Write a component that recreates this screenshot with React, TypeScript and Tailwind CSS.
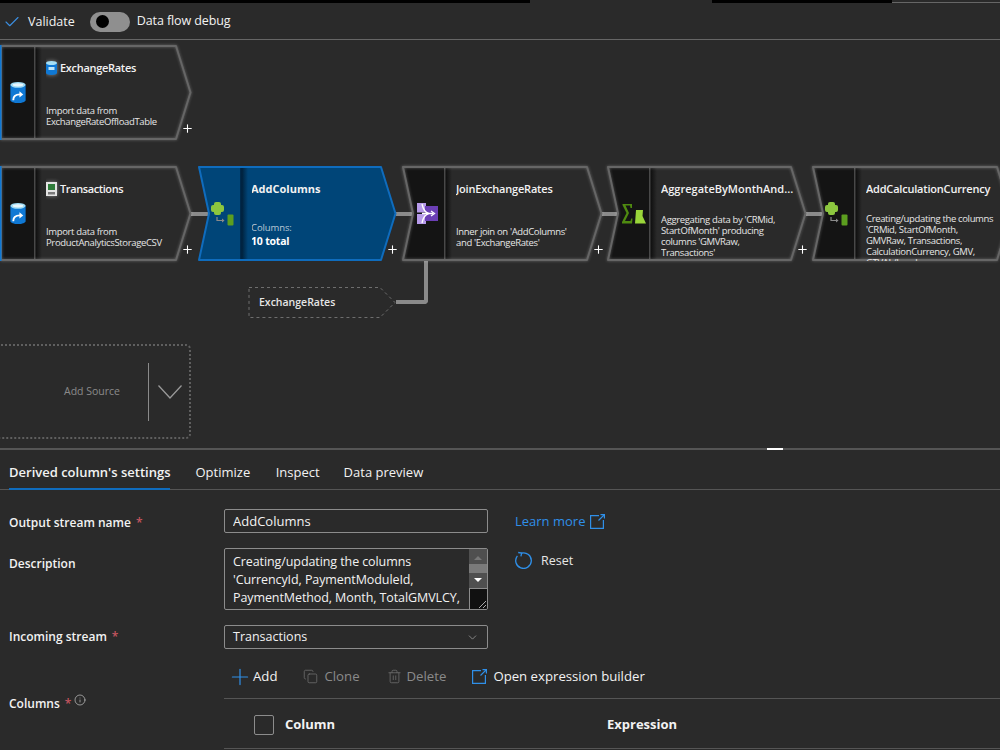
import { ChevronDown, Check, Copy, Info, Plus, Trash2 } from "lucide-react";
import type { ReactNode } from "react";

type NodeProps = {
  left: number;
  top: number;
  width: number;
  band?: number;
  source?: boolean;
  selected?: boolean;
  icon: ReactNode;
  title: ReactNode;
  children: ReactNode;
  descTop?: number;
};

function DbIcon() {
  return (
    <svg width="16" height="21" viewBox="0 0 16 22">
      <path d="M0 3v16c0 1.600 3.600 3 8 3s8-1.400 8-3V3z" fill="#0f78d4" />
      <ellipse cx="8" cy="3" rx="8" ry="3" fill="#9fdcf5" />
      <ellipse cx="8" cy="3" rx="5.500" ry="1.600" fill="#e8f7fd" />
      <path d="M3 19c0-4 2.500-6 7-6" fill="none" stroke="#fff" strokeWidth="2" />
      <path d="M9.500 9.800 13.500 13l-4 3.200z" fill="#fff" />
    </svg>
  );
}

function DerivedIcon() {
  return (
    <svg width="23" height="24" viewBox="0 0 23 24">
      <rect x="3" y="0" width="7" height="13" rx="2" fill="#8cc63f" />
      <rect x="0" y="3" width="13" height="7" rx="2" fill="#8cc63f" />
      <circle cx="6.500" cy="6.500" r="5" fill="#8cc63f" />
      <path d="M6 15v3.500h7" fill="none" stroke="#8a8a8a" strokeWidth="1.200" />
      <path d="M11 16.500l2.500 2-2.500 2z" fill="#8a8a8a" />
      <rect x="16.500" y="12.500" width="6" height="11" rx="1" fill="#5c9e1f" />
    </svg>
  );
}

function JoinIcon() {
  return (
    <svg className="ml-[2px]" width="21" height="21" viewBox="0 0 21 21">
      <rect x="0" y="0" width="9" height="9.500" fill="#b79bea" />
      <rect x="0" y="11" width="9" height="10" fill="#b79bea" />
      <path d="M8 3h13v15H8z" fill="#6b3fb5" />
      <path d="M5 1c1 5 3 8.500 7 9.500M5 20c1-5 3-8.500 7-9.500M5 10.500h11" fill="none" stroke="#fff" strokeWidth="1.300" />
      <path d="M14 8l3.500 2.500-3.500 2.500" fill="none" stroke="#fff" strokeWidth="1.300" />
    </svg>
  );
}

function AggregateIcon() {
  return (
    <svg className="ml-[4px]" width="24" height="20" viewBox="0 0 24 20">
      <path d="M0.500 0h9.500v4h-1.500l-.5-2.500h-4.500l3.500 7.500-4 8h5.500l.7-2.500h1.300l-.5 5h-10v-1.500l4.500-9-4-8z" fill="#4f8a10" />
      <path d="M14 6h7l-.5 6 3.500 7.500h-11z" fill="#9ad63a" />
    </svg>
  );
}

function SmallDb() {
  return (
    <svg className="drop-shadow-[0_0_2px_rgba(255,255,255,0.45)]" width="11" height="14" viewBox="0 0 11 14">
      <path d="M0 2v10c0 1.100 2.500 2 5.500 2s5.500-.9 5.500-2V2z" fill="#0f78d4" />
      <ellipse cx="5.500" cy="2" rx="5.500" ry="2" fill="#a5dff5" />
      <rect x="2.500" y="6" width="6" height="3" fill="#bfe6f8" />
    </svg>
  );
}

function SmallCsv() {
  return (
    <svg className="drop-shadow-[0_0_2px_rgba(255,255,255,0.45)]" width="11" height="14" viewBox="0 0 11 14">
      <path d="M0 0h11v14H0z" fill="#e4e4e4" />
      <rect x="2" y="2" width="7" height="6" fill="#2f7d3b" />
      <rect x="2" y="10" width="7" height="2.500" fill="#7a7a7a" />
    </svg>
  );
}

function OpenIcon({ className }: { className?: string }) {
  return (
    <svg className={className} width="15" height="15" viewBox="0 0 15 15" fill="none" stroke="currentColor" strokeWidth="1.200">
      <path d="M9 1.600H.6v12.800h12.800V6" />
      <path d="M10.500.6h3.900v3.900M14.400.6 8.500 6.500" />
    </svg>
  );
}

function ResetIcon() {
  return (
    <svg className="ml-[27px] mt-[3px] text-[#2f8fe8]" width="18" height="18" viewBox="0 0 18 18" fill="none" stroke="currentColor" strokeWidth="1.300">
      <path d="M6.500 2.100A7.800 7.800 0 1 1 2.400 4.800" />
      <path d="M3.200 1.500 6.700 2 5.900 5.400" />
    </svg>
  );
}

// one step of the flow: outline, dark icon band, then title and description
function FlowNode({ left, top, width, band = 43, source, selected, icon, title, children, descTop = 48 }: NodeProps) {
  const h = 95;
  const mid = 47.500;
  const notch = source ? 0 : 11;
  const fill = selected ? "#004578" : "#2a2a2a";
  const stroke = selected ? "#0f6cbd" : "#666666";
  const outline = `M1 1H${width - 15}L${width - 0.500} ${mid}L${width - 15} ${h - 1}H1${notch ? `L${notch} ${mid}` : ""}Z`;
  const bandPath = `M1 1H${band}V${h - 1}H1${notch ? `L${notch} ${mid}` : ""}Z`;
  return (
    <div className="absolute h-[95px]" style={{ left, top, width }}>
      <svg className="absolute inset-0" width={width} height={h} overflow="visible">
        <defs>
          <linearGradient id={`edge-${left}-${top}`} x1="0" x2="1" y1="0" y2="0">
            <stop offset="0" stopColor={selected ? "#001c33" : "#0c0c0c"} />
            <stop offset="1" stopColor={fill} />
          </linearGradient>
        </defs>
        <path d={outline} fill={fill} />
        <rect x={band} y="1" width="7" height={h - 2} fill={`url(#edge-${left}-${top})`} />
        <path d={bandPath} fill={selected ? "#004578" : "#141414"} />
        <rect x={band - 1} y="1" width="1.500" height={h - 2} fill={selected ? "#00294a" : "#484848"} />
        <path
          className={selected ? "" : "drop-shadow-[0_0_1.500px_rgba(255,255,255,0.3)]"}
          d={outline}
          fill="none"
          stroke={stroke}
          strokeWidth="2"
          strokeLinejoin="round"
        />
        {source ? <rect x="0" y="0" width="1.500" height={h} fill="#0f78d4" /> : null}
      </svg>
      <div className="absolute top-0 bottom-0 left-0 flex items-center justify-center" style={{ width: band, paddingLeft: notch ? 6 : 0 }}>
        {icon}
      </div>
      <div className="absolute top-0 bottom-0 overflow-hidden" style={{ left: band + 11, right: 4 }}>
        <div className="mt-[15px] flex h-[16px] items-center gap-[3px] text-[11px] font-semibold tracking-[-0.2px] text-[#f2f2f2]">{title}</div>
        <div className="absolute left-0 right-0 text-[9.500px] leading-[11px] tracking-[-0.35px] text-[#e6e6e6]" style={{ top: descTop }}>
          {children}
        </div>
      </div>
      <Plus className="absolute bottom-[5px] right-[-3px] text-white" size={13} strokeWidth={2} />
    </div>
  );
}

function Canvas() {
  return (
    <div className="relative h-[408px] overflow-hidden">
      {/* connectors */}
      <div className="absolute left-[191px] top-[172px] h-[4px] w-[18px] bg-[#8a8a8a]" />
      <div className="absolute left-[396px] top-[172px] h-[4px] w-[18px] bg-[#8a8a8a]" />
      <div className="absolute left-[602px] top-[172px] h-[4px] w-[18px] bg-[#8a8a8a]" />
      <div className="absolute left-[806px] top-[172px] h-[4px] w-[18px] bg-[#8a8a8a]" />
      <div className="absolute left-[396px] top-[218px] h-[46px] w-[32px] rounded-br-[4px] border-b-[4px] border-r-[4px] border-[#8a8a8a]" />

      <FlowNode left={0} top={5} width={191} band={35} source icon={<DbIcon />} descTop={60} title={<><SmallDb /><span className="tracking-[-0.3px]">ExchangeRates</span></>}>
        Import data from
        <br />
        ExchangeRateOffloadTable
      </FlowNode>
      <FlowNode left={0} top={126} width={191} band={35} source icon={<DbIcon />} descTop={60} title={<><SmallCsv /><span className="tracking-[-0.4px]">Transactions</span></>}>
        Import data from
        <br />
        ProductAnalyticsStorageCSV
      </FlowNode>
      <FlowNode left={198} top={126} width={198} selected icon={<DerivedIcon />} title={<span className="ml-[-1px] font-bold tracking-normal">AddColumns</span>}>
        <div className="ml-[-1px] pt-[8px]">
          <span className="tracking-[-0.1px] text-[#b9c8d6]">Columns:</span>
          <div className="mt-[3px] text-[10.500px] font-bold tracking-[-0.2px] text-white">10 total</div>
        </div>
      </FlowNode>
      <FlowNode left={402} top={126} width={200} icon={<JoinIcon />} descTop={60} title={<span>JoinExchangeRates</span>}>
        Inner join on 'AddColumns'
        <br />
        and 'ExchangeRates'
      </FlowNode>
      <FlowNode left={607} top={126} width={199} icon={<AggregateIcon />} descTop={48} title={<span className="tracking-normal">AggregateByMonthAnd...</span>}>
        Aggregating data by 'CRMid,
        <br />
        StartOfMonth' producing
        <br />
        columns 'GMVRaw,
        <br />
        Transactions'
      </FlowNode>
      <FlowNode left={812} top={126} width={200} icon={<DerivedIcon />} descTop={47} title={<span>AddCalculationCurrency</span>}>
        Creating/updating the columns
        <br />
        'CRMid, StartOfMonth,
        <br />
        GMVRaw, Transactions,
        <br />
        CalculationCurrency, GMV,
        <br />
        GTVAL/Local
      </FlowNode>

      {/* dashed reference to the second input of the join */}
      <svg className="absolute left-[248px] top-[246px]" width="150" height="34">
        <path d="M1 1.500H132L147 16.500L132 31.500H1Z" fill="none" stroke="#6e6e6e" strokeDasharray="3 3" />
      </svg>
      <span className="absolute left-[259px] top-[255px] text-[10.500px] font-semibold text-[#e6e6e6]">ExchangeRates</span>

      {/* add source */}
      <div className="absolute left-[-12px] top-[304px] flex h-[95px] w-[203px] items-center justify-end rounded-[5px] border-2 border-dotted border-[#5f5f5f]">
        <span className="mr-[28px] text-[10.500px] text-[#8a8a8a]">Add Source</span>
        <div className="mr-[9px] h-[58px] w-px bg-[#8a8a8a]" />
        <svg className="mr-[7px]" width="24" height="14" viewBox="0 0 24 14" fill="none" stroke="#999" strokeWidth="1.300">
          <path d="M.5.5 12 13 23.500.5" />
        </svg>
      </div>
    </div>
  );
}

function FormLabel({ children, required }: { children: ReactNode; required?: boolean }) {
  return (
    <span className="text-[12px] font-semibold text-[#f2f2f2]">
      {children}
      {required ? <span className="ml-[5px] text-[#c4555f]">*</span> : null}
    </span>
  );
}

export default function App() {
  return (
    <div className="h-[750px] w-[1000px] overflow-hidden bg-[#2a2a2a] font-['Open_Sans',sans-serif]">
      {/* top strip */}
      <div className="flex h-[3px]">
        <div className="w-[530px] bg-black" />
        <div className="w-[182px]" />
        <div className="w-[180px] bg-black" />
        <div className="mt-[2px] h-px flex-1 bg-[#666]" />
      </div>

      {/* toolbar */}
      <div className="flex h-[37px] items-center border-b border-[#666] pt-[1px]">
        <Check className="ml-[3px] text-[#3b8ee0]" size={18} strokeWidth={1.500} />
        <span className="ml-[7px] mt-[2px] text-[12.500px] text-[#f2f2f2]">Validate</span>
        <div className="ml-[15px] flex h-[20px] w-[40px] items-center rounded-full bg-[#8f8f8f] pl-[6px]">
          <div className="size-[13px] rounded-full bg-black" />
        </div>
        <span className="ml-[7px] text-[12.500px] tracking-[-0.1px] text-[#f2f2f2]">Data flow debug</span>
      </div>

      <Canvas />

      {/* bottom panel */}
      <div className="relative h-[302px] border-t-2 border-[#555]">
        <div className="absolute left-[767px] top-[-2px] h-[2px] w-[16px] bg-white" />

        <div className="flex h-[40px] items-center gap-[25px] border-b border-[#555] pl-[9px] text-[13px] text-[#f2f2f2]">
          <div className="relative flex h-full items-center pt-[6px] font-semibold">
            Derived column's settings
            <div className="absolute bottom-[-1px] left-0 right-0 h-[2px] bg-[#0f6cbd]" />
          </div>
          <span className="pt-[6px]">Optimize</span>
          <span className="ml-[0.500px] pt-[6px]">Inspect</span>
          <span className="ml-[-1px] pt-[6px]">Data preview</span>
        </div>

        <div className="pl-[9px] pt-[19px]">
          <div className="flex h-[24px] items-center">
            <div className="w-[215px]">
              <FormLabel required>Output stream name</FormLabel>
            </div>
            <input
              readOnly
              value="AddColumns"
              className="h-[24px] w-[264px] rounded-[2px] border border-[#8c8c8c] bg-[#2a2a2a] px-[8px] text-[13px] text-[#f2f2f2] outline-none"
            />
            <a className="ml-[27px] mt-[1px] text-[13px] text-[#2f8fe8]">Learn more</a>
            <OpenIcon className="ml-[5px] text-[#2f8fe8]" />
          </div>

          <div className="mt-[15px] flex h-[62px] items-start">
            <div className="w-[215px] pt-[2px]">
              <FormLabel>Description</FormLabel>
            </div>
            <div className="flex h-[62px] w-[264px] overflow-hidden rounded-[2px] border border-[#8c8c8c]">
              <div className="w-[245px] whitespace-nowrap px-[8px] pt-[4px] text-[12.500px] leading-[18px] tracking-[-0.09px] text-[#f2f2f2]">
                Creating/updating the columns
                <br />
                'CurrencyId, PaymentModuleId,
                <br />
                PaymentMethod, Month, TotalGMVLCY,
              </div>
              <div className="flex w-[18px] flex-col items-center bg-[#4f4f4f]">
                <div className="mt-[7px] size-0 border-x-[4px] border-b-[4px] border-x-transparent border-b-[#777]" />
                <div className="mt-[4px] h-[9px] w-full bg-[#7a7a7a]" />
                <div className="mt-[5px] size-0 border-x-[4px] border-t-[4px] border-x-transparent border-t-white" />
                <div className="relative mt-[6px] flex-1 self-stretch border-l border-t border-[#8c8c8c] bg-[#111]">
                  <svg className="absolute bottom-0 right-0" width="10" height="10">
                    <path d="M2 9L9 2M6 9L9 6" stroke="#aaa" />
                  </svg>
                </div>
              </div>
            </div>
            <ResetIcon />
            <span className="ml-[8px] mt-[4px] text-[12.500px] text-[#e6e6e6]">Reset</span>
          </div>

          <div className="mt-[15px] flex h-[24px] items-center">
            <div className="mt-[-4px] w-[215px]">
              <FormLabel required>Incoming stream</FormLabel>
            </div>
            <div className="flex h-[24px] w-[264px] items-center justify-between rounded-[2px] border border-[#8c8c8c] px-[8px] pt-[1px] text-[12.500px] text-[#f2f2f2]">
              Transactions
              <ChevronDown className="text-[#aaa]" size={13} strokeWidth={1.300} />
            </div>
          </div>

          <div className="flex">
            <div className="flex w-[215px] items-start gap-[3px] pt-[46px]">
              <FormLabel required>Columns</FormLabel>
              <Info className="mt-[-1px] text-[#d0d0d0]" size={12} strokeWidth={1.300} />
            </div>
            <div className="flex-1">
              <div className="flex h-[50px] items-center border-b border-[#555] pl-[3px] pt-[6px] text-[13.200px]">
                <Plus className="text-[#2f8fe8]" size={26} strokeWidth={1.100} />
                <span className="text-[#f2f2f2]">Add</span>
                <Copy className="ml-[26px] text-[#6e6e6e]" size={15} strokeWidth={1.300} />
                <span className="ml-[6px] text-[#8a8a8a]">Clone</span>
                <Trash2 className="ml-[27px] text-[#6e6e6e]" size={15} strokeWidth={1.300} />
                <span className="ml-[5px] text-[#8a8a8a]">Delete</span>
                <OpenIcon className="ml-[26px] text-[#2f8fe8]" />
                <span className="ml-[6px] text-[#f2f2f2]">Open expression builder</span>
              </div>
              <div className="flex h-[50px] items-center border-b border-[#555] pl-[30px] pt-[3px] text-[13px] font-bold text-[#f2f2f2]">
                <div className="size-[20px] rounded-[2px] border border-[#8c8c8c]" />
                <span className="ml-[11px] w-[322px]">Column</span>
                <span>Expression</span>
              </div>
            </div>
          </div>
        </div>
      </div>
    </div>
  );
}
